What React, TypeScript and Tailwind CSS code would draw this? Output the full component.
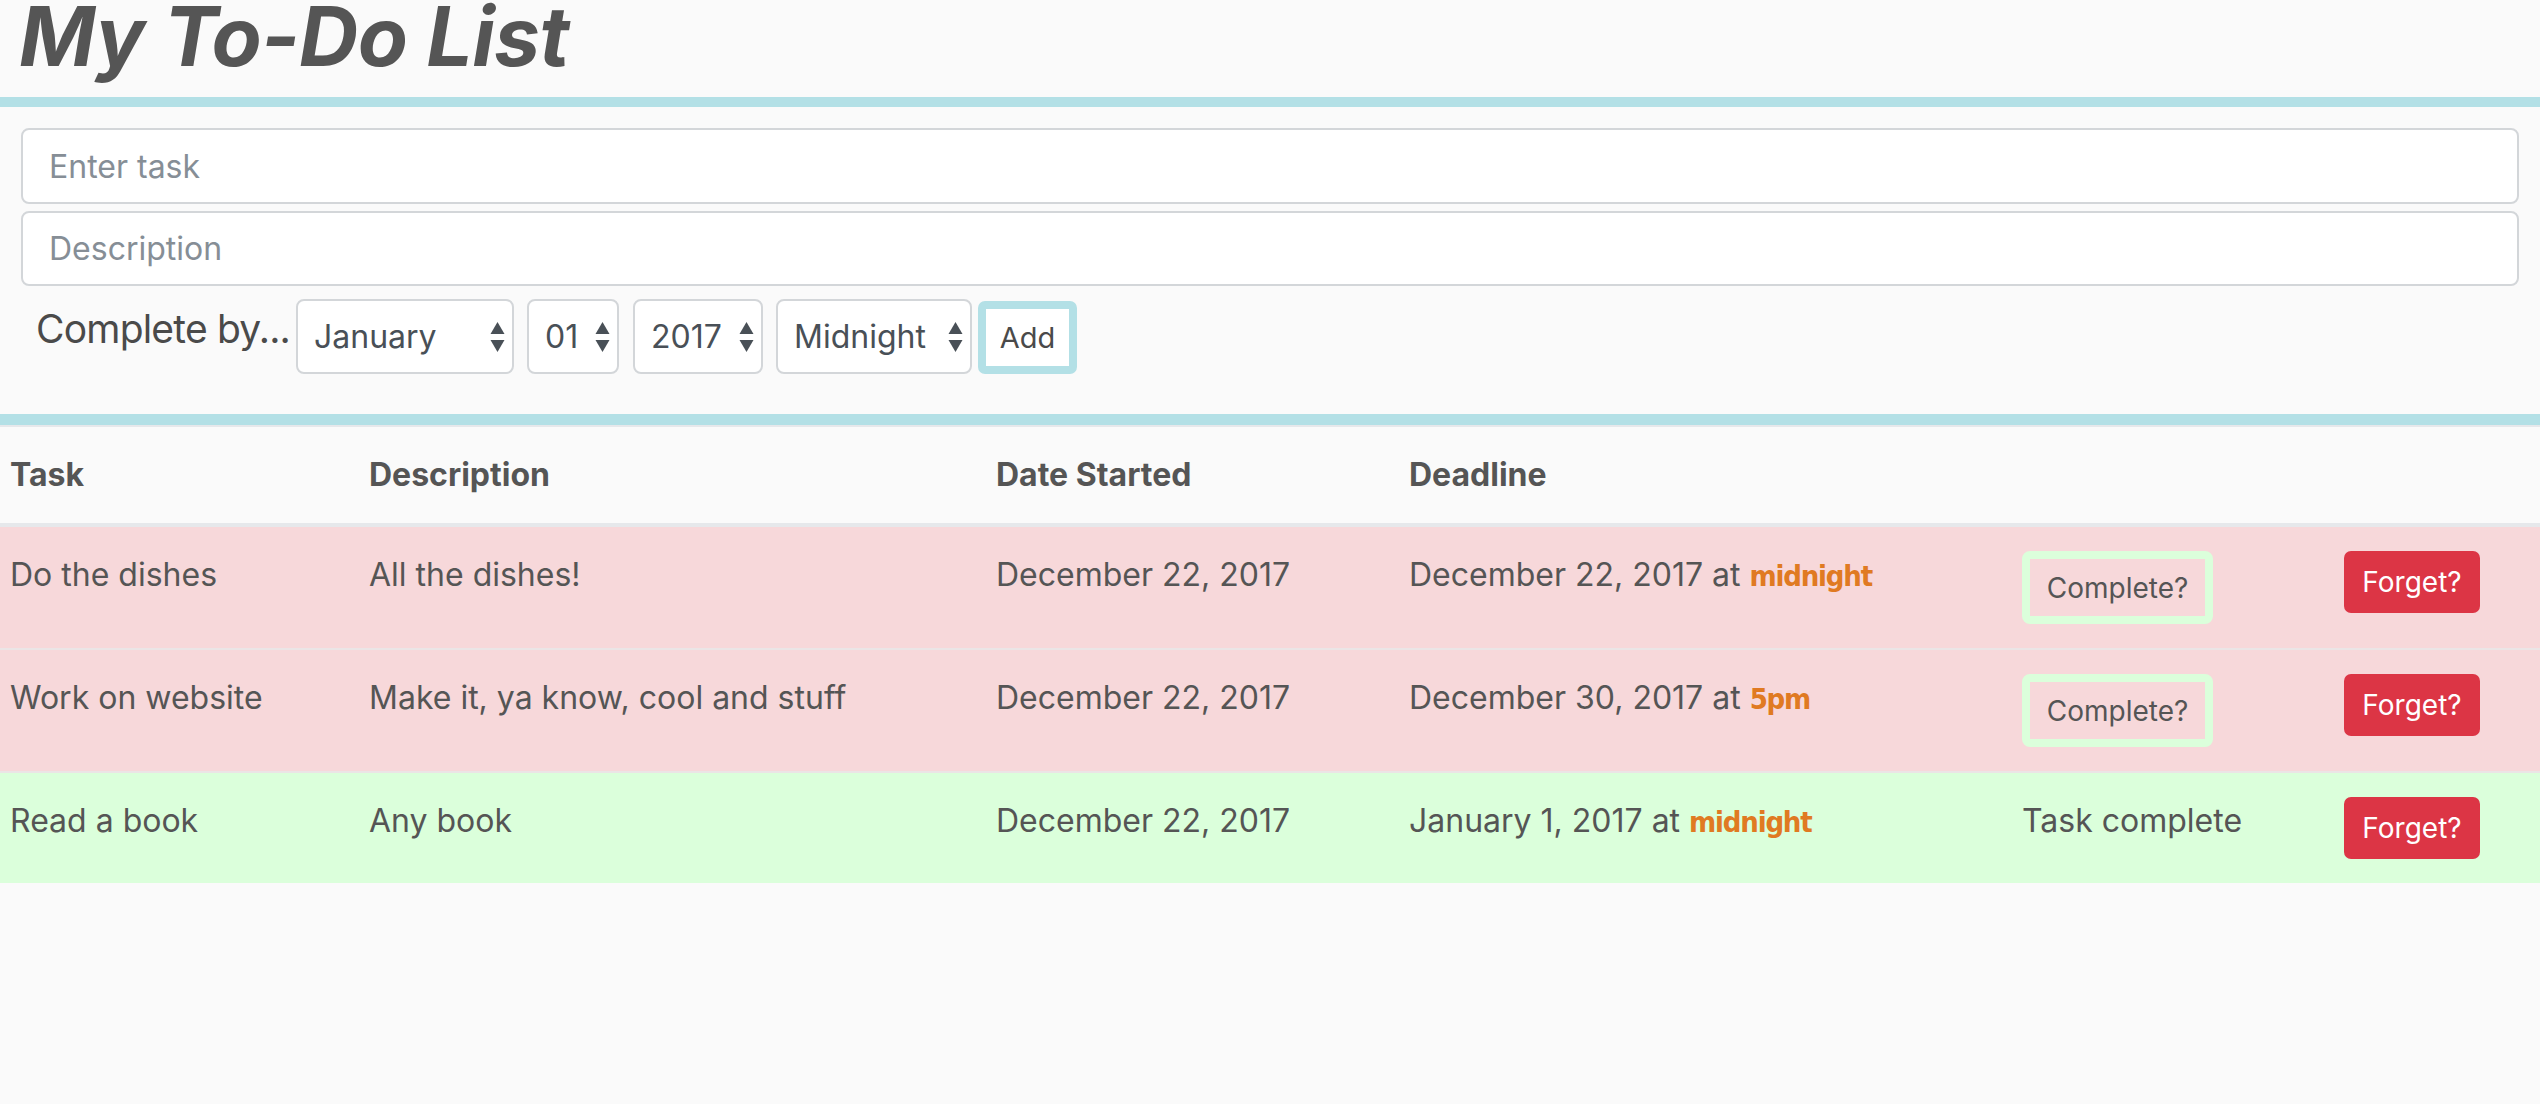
import React from 'react';

type Todo = {
  task: string;
  description: string;
  started: string;
  deadline: string;
  time: string;
  done: boolean;
};

const TODOS: Todo[] = [
  { task: 'Do the dishes', description: 'All the dishes!', started: 'December 22, 2017', deadline: 'December 22, 2017', time: 'midnight', done: false },
  { task: 'Work on website', description: 'Make it, ya know, cool and stuff', started: 'December 22, 2017', deadline: 'December 30, 2017', time: '5pm', done: false },
  { task: 'Read a book', description: 'Any book', started: 'December 22, 2017', deadline: 'January 1, 2017', time: 'midnight', done: true },
];

function Arrows() {
  return (
    <svg className="pointer-events-none absolute right-[9px] top-1/2 -translate-y-1/2" width="15" height="30" viewBox="0 0 15 30">
      <path d="M7.5 0 L14.5 12 L0.5 12 Z" fill="#495057" />
      <path d="M7.5 30 L14.5 18 L0.5 18 Z" fill="#495057" />
    </svg>
  );
}

function Select({ options, width }: { options: string[]; width: string }) {
  return (
    <div className={`relative ${width}`}>
      <select
        defaultValue={options[0]}
        className="h-[75px] w-full appearance-none rounded-[8px] border-2 border-[#d3d6d9] bg-white pl-[16px] pr-[30px] text-[32px] text-[#495057] outline-none"
      >
        {options.map((o) => (
          <option key={o}>{o}</option>
        ))}
      </select>
      <Arrows />
    </div>
  );
}

export default function App() {
  return (
    <div className="min-h-screen bg-[#fafafa] font-[Inter,sans-serif] text-[#555]">
      {/* Title */}
      <h1 className="h-[97px] pl-[19px] text-[82px] font-bold italic leading-[74px] tracking-[-0.5px] text-[#555]">
        My To-Do List
      </h1>
      <div className="h-[10px] bg-[#b3e0e6]" />

      {/* Form */}
      <div className="flex flex-col gap-[7px] px-[21px] pt-[21px]">
        <input
          placeholder="Enter task"
          className="h-[76px] w-full rounded-[8px] border-2 border-[#d3d6d9] bg-white pl-[26px] text-[32px] text-[#495057] outline-none placeholder:text-[#868e96]"
        />
        <input
          placeholder="Description"
          className="h-[75px] w-full rounded-[8px] border-2 border-[#d3d6d9] bg-white pl-[26px] text-[32px] text-[#495057] outline-none placeholder:text-[#868e96]"
        />
        <div className="mt-[6px] flex items-start pl-[15px]">
          <span className="mr-[6px] text-[39px] leading-[60px] tracking-[-0.8px] text-[#4a4a4a]">Complete by...</span>
          <div className="flex items-center">
            <div className="mr-[13px]">
              <Select width="w-[218px]" options={['January', 'February', 'March']} />
            </div>
            <div className="mr-[14px]">
              <Select width="w-[92px]" options={['01', '02', '03']} />
            </div>
            <div className="mr-[13px]">
              <Select width="w-[130px]" options={['2017', '2018']} />
            </div>
            <div className="mr-[6px]">
              <Select width="w-[196px]" options={['Midnight', 'Noon', '5pm']} />
            </div>
            <button className="mt-[2px] h-[73px] w-[99px] rounded-[7px] border-[8px] border-[#b3e0e6] bg-white text-[29px] text-[#4a4a4a]">
              Add
            </button>
          </div>
        </div>
      </div>

      <div className="mt-[40px] h-[11px] bg-[#b3e0e6]" />

      {/* Table */}
      <table className="w-full table-fixed border-collapse border-t-2 border-[#e6e8eb]">
        <colgroup>
          <col className="w-[359px]" />
          <col className="w-[627px]" />
          <col className="w-[413px]" />
          <col className="w-[613px]" />
          <col className="w-[322px]" />
          <col />
        </colgroup>
        <thead>
          <tr className="border-b-4 border-[#e6e8eb]">
            <th className="py-[24px] pl-[10px] text-left text-[32px] font-bold leading-[48px]">Task</th>
            <th className="py-[24px] pl-[10px] text-left text-[32px] font-bold leading-[48px]">Description</th>
            <th className="py-[24px] pl-[10px] text-left text-[32px] font-bold leading-[48px]">Date Started</th>
            <th className="py-[24px] pl-[10px] text-left text-[32px] font-bold leading-[48px]">Deadline</th>
            <th />
            <th />
          </tr>
        </thead>
        <tbody>
          {TODOS.map((t, i) => (
            <tr
              key={i}
              className={`${t.done ? 'bg-[#dbffdb]' : 'bg-[#f7d8da]'} ${i > 0 ? 'border-t-2 border-[#ebe5e6]' : ''}`}
            >
              <td className="py-[24px] pl-[10px] align-top text-[32px] leading-[48px]">{t.task}</td>
              <td className="py-[24px] pl-[10px] align-top text-[32px] leading-[48px]">{t.description}</td>
              <td className="py-[24px] pl-[10px] align-top text-[32px] leading-[48px]">{t.started}</td>
              <td className="py-[24px] pl-[10px] align-top text-[32px] leading-[48px] whitespace-nowrap">
                {t.deadline} at{' '}
                <span className="font-['DejaVu_Sans_Condensed',sans-serif] text-[29px] font-bold tracking-[-1.2px] text-[#e07a22]">
                  {t.time}
                </span>
              </td>
              <td className="py-[24px] pl-[10px] align-top text-[32px] leading-[48px]">
                {t.done ? (
                  'Task complete'
                ) : (
                  <button className="h-[73px] w-[191px] rounded-[8px] border-[8px] border-[#dbffdb] text-[28px] text-[#555]">
                    Complete?
                  </button>
                )}
              </td>
              <td className="py-[24px] pl-[10px] align-top">
                <button className="h-[62px] w-[136px] rounded-[7px] bg-[#dc3545] text-[28px] text-white">
                  Forget?
                </button>
              </td>
            </tr>
          ))}
        </tbody>
      </table>
    </div>
  );
}
